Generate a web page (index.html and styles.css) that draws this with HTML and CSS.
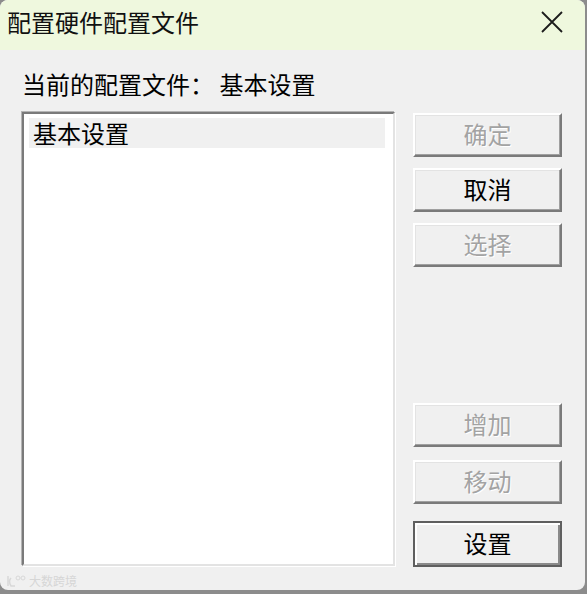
FILE: index.html
```html
<!DOCTYPE html>
<html lang="zh-CN">
<head>
    <meta charset="UTF-8">
    <title>配置硬件配置文件</title>
    <link rel="stylesheet" href="styles.css">
</head>
<body>
    <div class="window">
        <div class="titlebar">
            <span class="title">配置硬件配置文件</span>
            <svg class="close" width="22" height="22" viewBox="0 0 22 22">
                <path d="M1 1 L21 21 M21 1 L1 21" stroke="#1c1c1c" stroke-width="1.8" fill="none"/>
            </svg>
        </div>

        <div class="content">
            <div class="current">当前的配置文件：&nbsp;基本设置</div>

            <div class="main">
                <div class="listbox">
                    <div class="list-item selected">基本设置</div>
                </div>

                <div class="buttons">
                    <div class="btn-group">
                        <button class="btn" disabled>确定</button>
                        <button class="btn">取消</button>
                        <button class="btn" disabled>选择</button>
                    </div>
                    <div class="btn-group bottom">
                        <button class="btn" disabled>增加</button>
                        <button class="btn move" disabled>移动</button>
                        <button class="btn default">设置</button>
                    </div>
                </div>
            </div>
        </div>

        <div class="watermark">
            <svg width="20" height="14" viewBox="0 0 20 14">
                <path d="M2 2 L2 12 M5 4 Q2 7 5 12 L9 12" stroke="#d8d8d8" stroke-width="1.5" fill="none"/>
                <circle cx="12" cy="4" r="2" stroke="#d8d8d8" fill="none"/>
                <circle cx="17" cy="4" r="2" stroke="#d8d8d8" fill="none"/>
            </svg>
            <span>大数跨境</span>
        </div>
    </div>
</body>
</html>
```

FILE: styles.css
```css
body {
    margin: 0;
    background-color: #8c8c8c;
    font-family: "Noto Sans CJK SC", "Noto Sans", sans-serif;
}
.window {
    position: relative;
    width: 585px;
    height: 590px;
    background-color: #f0f0f0;
    border-radius: 8px;
    overflow: hidden;
}
.titlebar {
    height: 50px;
    background-color: #eff8de;
    display: flex;
    align-items: center;
    justify-content: space-between;
    padding: 0 22px 0 7px;
}
.title {
    font-size: 24px;
    color: #111;
    margin-top: -7px;
}
.close {
    margin-top: -6px;
}
.content {
    padding: 0 0 0 22px;
}
.current {
    font-size: 24px;
    color: #000;
    height: 62px;
    line-height: 68px;
}
.main {
    display: flex;
    gap: 18px;
}
.listbox {
    width: 356px;
    height: 446px;
    background-color: #fff;
    border: 2px solid;
    border-color: #7a7a7a #e3e3e3 #e3e3e3 #7a7a7a;
    box-shadow: -1px -1px 0 #b4b4b4, 1px 1px 0 #fff;
    padding: 4px 8px 0 5px;
}
.list-item {
    font-size: 24px;
    line-height: 30px;
    color: #000;
    padding-left: 4px;
}
.list-item.selected {
    background-color: #f0f0f0;
}
.buttons {
    width: 149px;
    display: flex;
    flex-direction: column;
    justify-content: space-between;
}
.btn-group {
    display: flex;
    flex-direction: column;
    gap: 11px;
    padding-top: 1px;
}
.btn-group.bottom {
    gap: 0;
    padding-top: 0;
}
.btn {
    width: 149px;
    height: 44px;
    font-family: inherit;
    font-size: 24px;
    color: #000;
    background-color: #f0f0f0;
    border: 2px solid;
    border-color: #fff #7a7a7a #7a7a7a #fff;
    box-shadow: inset -1px -1px 0 #a0a0a0, inset 1px 1px 0 #e3e3e3;
    padding: 0 0 3px 0;
    margin: 0;
}
.btn:disabled {
    color: #a3a3a3;
    text-shadow: 1px 1px 0 #fff;
}
.btn.move {
    margin-top: 13px;
}
.btn.default {
    margin-top: 17px;
    height: 46px;
    border: 2px solid #5f5f5f;
    box-shadow: inset 2px 2px 0 #fff, inset -2px -2px 0 #8a8a8a;
    margin-bottom: -1px;
}
.watermark {
    position: absolute;
    left: 6px;
    bottom: 1px;
    display: flex;
    align-items: center;
    gap: 3px;
    font-size: 12px;
    color: #d6d6d6;
}
```
